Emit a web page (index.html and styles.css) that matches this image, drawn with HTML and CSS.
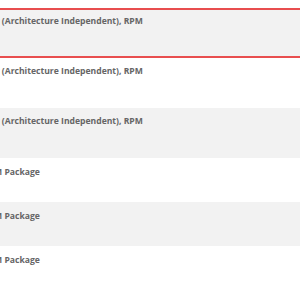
FILE: index.html
```html
<!doctype html>
<html lang="en">
<head>
  <meta charset="utf-8">
  <title>Downloads</title>
  <link rel="stylesheet" href="styles.css">
</head>
<body>
	<ul class="downloads">
		<li class="item rpm selected"><span class="name">Linux Server (Architecture Independent), RPM</span></li>
		<li class="item rpm"><span class="name">Linux Server (Architecture Independent), RPM</span></li>
		<li class="item rpm shaded"><span class="name">Linux Server (Architecture Independent), RPM</span></li>
		<li class="item pkg"><span class="name">Linux RPM Package</span></li>
		<li class="item pkg shaded"><span class="name">Linux RPM Package</span></li>
		<li class="item pkg"><span class="name">Linux RPM Package</span></li>
	</ul>
</body>
</html>
```

FILE: styles.css
```css
body {
	margin			: 0;
	padding-top		: 8px;
	overflow		: hidden;
	background		: #fff;
	font-family		: "Open Sans", sans-serif;
}

.downloads {
	list-style		: none;
	margin			: 0;
	padding			: 0;
}

.item {
	box-sizing		: border-box;
	padding-top		: 6px;
	white-space		: nowrap;
	overflow		: hidden;
	font-size		: 8.6px;
	font-weight		: 700;
	line-height		: 14px;
	color			: #666;
}

.rpm {
	height			: 50px;
}

.pkg {
	height			: 44px;
	padding-top		: 7px;
}

.shaded {
	background		: #f2f2f2;
}

.selected {
	background		: #f2f2f2;
	border-top		: 2px solid #e84e4f;
	border-bottom	: 2px solid #e84e4f;
	padding-top		: 4px;
}

.name {
	display			: inline-block;
	margin-left		: -54px;
}

.pkg .name {
	margin-left		: -43px;
}
```
